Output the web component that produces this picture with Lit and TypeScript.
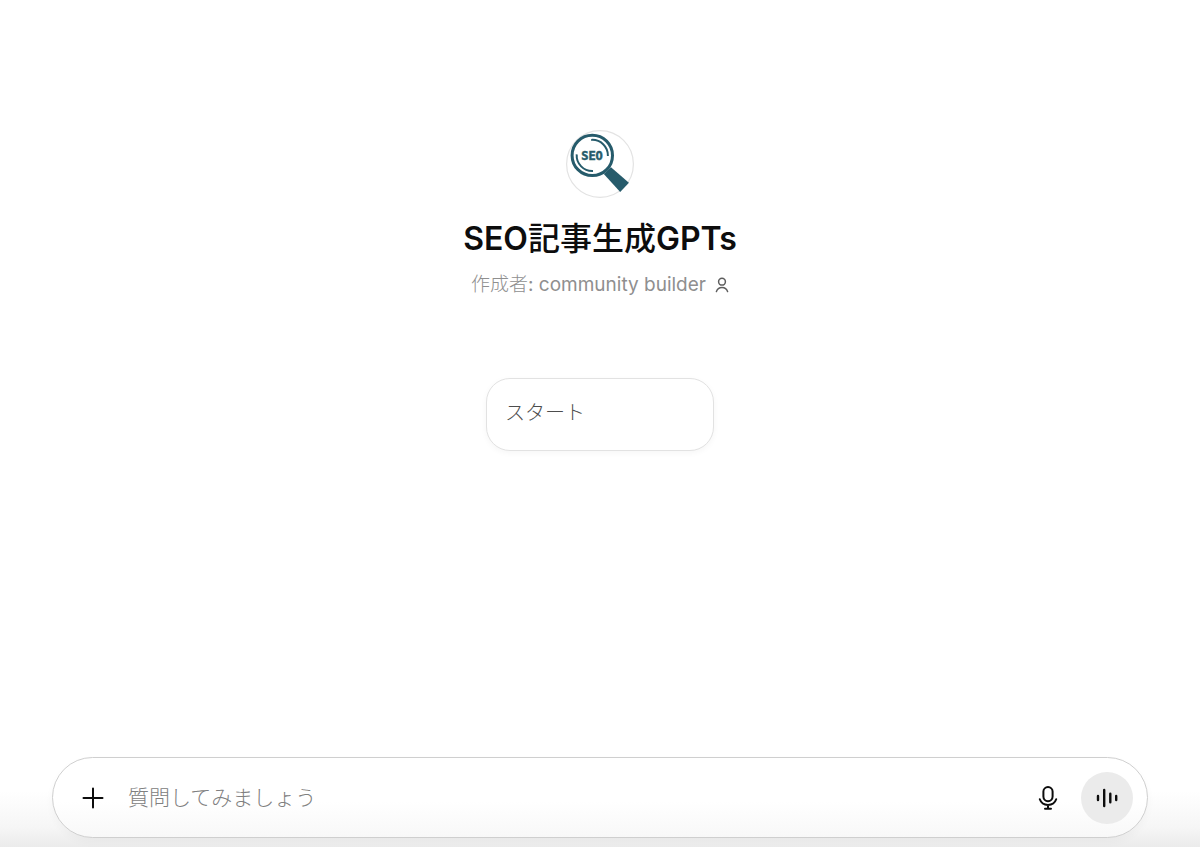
import { LitElement, html, css } from "lit";
import { customElement } from "lit/decorators.js";

@customElement("seo-logo")
class SeoLogo extends LitElement {
  static styles = css`
    :host { display: block; width: 68px; height: 68px; }
    svg { display: block; }
    .label {
      font: 700 12px "DejaVu Sans Mono", monospace;
      fill: #265b6b;
      stroke: #265b6b;
      stroke-width: 0.5px;
    }
  `;
  render() {
    return html`
      <svg width="68" height="68" viewBox="0 0 68 68" role="img" aria-label="SEO">
        <circle cx="34" cy="34" r="33.4" fill="#fff" stroke="#e3e3e3" stroke-width="1.2" />
        <g fill="none" stroke="#265b6b">
          <circle cx="26.3" cy="25.4" r="20.2" stroke-width="3" />
          <path d="M25.2 9.9A15.6 15.6 0 0 1 41.9 26" stroke-width="2" />
          <path d="M10.7 24.4A15.6 15.6 0 0 0 27 41" stroke-width="2" />
        </g>
        <path d="M37.8 44L45 37.2L62.9 52.8L54.2 62Z" fill="#265b6b" />
        <text class="label" x="26" y="29.5" text-anchor="middle">SEO</text>
      </svg>
    `;
  }
}

@customElement("chat-composer")
class ChatComposer extends LitElement {
  static styles = css`
    :host { display: block; }
    .bar {
      display: flex;
      align-items: center;
      box-sizing: border-box;
      min-height: 81px;
      padding: 0 14px 0 23px;
      border: 1px solid #cfcfcf;
      border-radius: 41px;
      background: linear-gradient(#fff 55%, #f8f8f8);
      box-shadow: 0 4px 8px rgba(0, 0, 0, 0.03);
    }
    button {
      display: grid;
      place-items: center;
      flex: none;
      padding: 0;
      border: 0;
      background: none;
      color: #0d0d0d;
      cursor: pointer;
    }
    .tool { width: 34px; height: 34px; }
    .voice {
      width: 52px;
      height: 52px;
      margin-left: 16px;
      border-radius: 50%;
      background: #ebebeb;
    }
    .prompt {
      flex: 1;
      min-width: 0;
      margin: 0 16px 0 18px;
      padding: 0;
      border: 0;
      outline: 0;
      background: none;
      color: #0d0d0d;
      font: 300 21px/32px Inter, "Noto Sans CJK JP", sans-serif;
    }
    .prompt::placeholder { color: #808080; opacity: 1; }
  `;
  render() {
    return html`
      <form class="bar" @submit=${(e: Event) => e.preventDefault()}>
        <button class="tool" type="button" aria-label="追加">
          <svg width="22" height="22" viewBox="0 0 22 22" fill="none" stroke="currentColor" stroke-width="2" stroke-linecap="round">
            <path d="M11 1.5v19M1.5 11h19" />
          </svg>
        </button>
        <input class="prompt" type="text" aria-label="質問" placeholder="質問してみましょう" />
        <button class="tool" type="button" aria-label="音声入力">
          <svg width="20" height="26" viewBox="0 0 20 26" fill="none" stroke="currentColor" stroke-width="2" stroke-linecap="round">
            <rect x="5.4" y="2" width="9.2" height="14.2" rx="4.6" />
            <path d="M1.8 14.3C3 17.8 6.2 19.9 10 19.9S17 17.8 18.2 14.3M10 20v3.6M7 23.8h6" />
          </svg>
        </button>
        <button class="voice" type="button" aria-label="音声モード">
          <svg width="22" height="20" viewBox="0 0 22 20" fill="none" stroke="currentColor" stroke-width="2.4" stroke-linecap="round">
            <path d="M2 8v4M8.2 2v16M14.3 5.8v8.4M20.2 8v4" />
          </svg>
        </button>
      </form>
    `;
  }
}

@customElement("app-root")
class AppRoot extends LitElement {
  static styles = css`
    :host {
      display: flex;
      flex-direction: column;
      box-sizing: border-box;
      min-height: 100vh;
      padding: 130px 52px 9px;
      background: linear-gradient(to top, #ebebeb, #f6f6f6 20px, #fff 56px);
      font-family: Inter, "Noto Sans CJK JP", sans-serif;
      color: #0d0d0d;
    }
    .hero {
      display: flex;
      flex: 1;
      flex-direction: column;
      align-items: center;
    }
    .title {
      margin: 21px 0 0;
      font-size: 32px;
      line-height: 40px;
      font-weight: 600;
    }
    .title-ja { font-weight: 500; }
    .author {
      display: flex;
      align-items: center;
      gap: 9px;
      margin: 12px 0 0;
      color: #8f8f8f;
      font-size: 19px;
      line-height: 28px;
    }
    .author-ja { font-weight: 300; }
    .person { color: #5d5d5d; }
    .starter {
      box-sizing: border-box;
      width: 228px;
      min-height: 73px;
      margin-top: 79px;
      padding: 0 18px 4px;
      border: 1px solid #e2e2e2;
      border-radius: 24px;
      background: #fff;
      box-shadow: 0 2px 6px rgba(0, 0, 0, 0.04);
      color: #4d4d4d;
      font: 300 20px/28px Inter, "Noto Sans CJK JP", sans-serif;
      text-align: left;
      cursor: pointer;
    }
  `;
  render() {
    return html`
      <main class="hero">
        <seo-logo></seo-logo>
        <h1 class="title">SEO<span class="title-ja">記事生成</span>GPTs</h1>
        <p class="author">
          <span><span class="author-ja">作成者</span>: community builder</span>
          <svg class="person" width="14" height="16" viewBox="0 0 14 16" fill="none" stroke="currentColor" stroke-width="1.5" stroke-linecap="round">
            <circle cx="7" cy="4.7" r="3.4" />
            <path d="M1.4 14.6C2.2 11.8 4.3 10.4 7 10.4s4.8 1.4 5.6 4.2" />
          </svg>
        </p>
        <button class="starter" type="button">スタート</button>
      </main>
      <chat-composer></chat-composer>
    `;
  }
}
